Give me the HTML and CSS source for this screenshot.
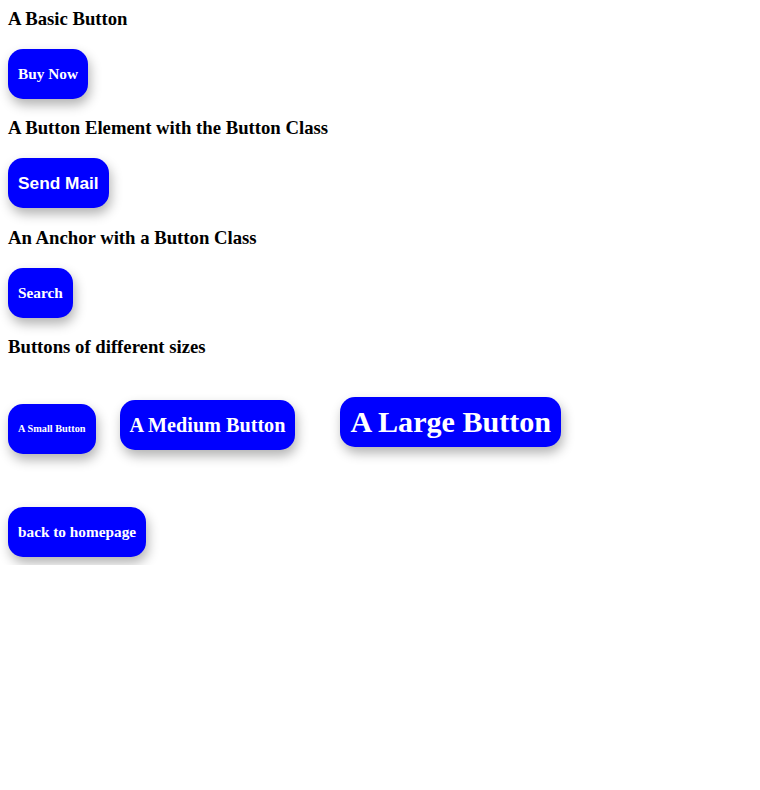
FILE: index.html
```html
<!DOCTYPE html>
<html lang="en">
<head>
<meta charset="utf-8">
<title>Buttons</title>
<link rel="stylesheet" href="styles.css">
</head>
<body>
  <h3 class="title first">A Basic Button</h3>
  <div class="row"><a class="btn" href="#">Buy Now</a></div>

  <h3 class="title">A Button Element with the Button Class</h3>
  <div class="row"><button class="btn btn-el" type="button">Send Mail</button></div>

  <h3 class="title">An Anchor with a Button Class</h3>
  <div class="row"><a class="btn" href="#">Search</a></div>

  <h3 class="title">Buttons of different sizes</h3>
  <div class="row size-row">
    <a class="btn btn-small" href="#">A Small Button</a>
    <a class="btn btn-medium" href="#">A Medium Button</a>
    <a class="btn btn-large" href="#">A Large Button</a>
  </div>

  <div class="row back-row"><a class="btn" href="#">back to homepage</a></div>
</body>
</html>
```

FILE: styles.css
```css
body {
  margin: 0;
  padding: 8px;
  font-family: "Liberation Serif", "Times New Roman", serif;
  color: #000;
  background: #fff;
}

.title {
  font-size: 18.72px;
  font-weight: bold;
  margin: 18.72px 0;
  line-height: normal;
}

.title.first {
  margin-top: 0;
}

.row {
  display: flex;
  align-items: baseline;
}

.btn {
  display: inline-block;
  box-sizing: border-box;
  height: 50px;
  line-height: 50px;
  padding: 0 10px;
  margin: 0;
  border: none;
  border-radius: 15px;
  background: #0000ff;
  color: #fff;
  font-family: "Liberation Serif", "Times New Roman", serif;
  font-size: 15.3px;
  font-weight: bold;
  text-decoration: none;
  box-shadow: 2px 6px 12px rgba(0, 0, 0, 0.3);
  white-space: nowrap;
}

.btn-el {
  font-family: "Liberation Sans", Arial, sans-serif;
  font-size: 17.3px;
  cursor: pointer;
}

.size-row {
  padding-top: 20px;
}

.btn-small {
  font-size: 10.3px;
  margin-right: 24px;
}

.btn-medium {
  font-size: 20.2px;
  margin-right: 45px;
}

.btn-large {
  font-size: 30.1px;
}

.back-row {
  margin-top: 53px;
}
```
